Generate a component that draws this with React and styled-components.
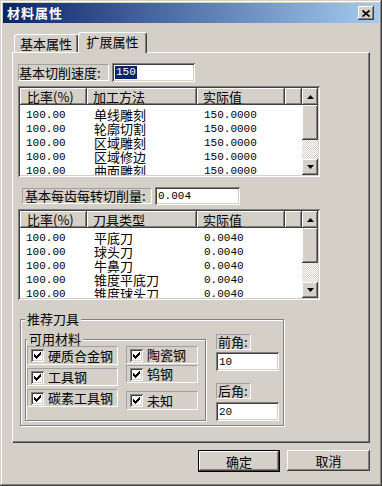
import React from "react";
import styled, { createGlobalStyle } from "styled-components";

const GlobalStyle = createGlobalStyle`
  html, body { margin: 0; padding: 0; background: #d4d0c8; }
  body {
    font-family: "Noto Sans CJK SC", "Liberation Sans", sans-serif;
    font-size: 13px;
    color: #000;
  }
  * { box-sizing: border-box; }
`;

const raised = `box-shadow: inset -1px -1px #404040, inset 1px 1px #fff, inset -2px -2px #808080, inset 2px 2px #d4d0c8;`;
const sunken = `box-shadow: inset 1px 1px #808080, inset -1px -1px #fff, inset 2px 2px #404040, inset -2px -2px #d4d0c8;`;

const Window = styled.div`
  width: 382px;
  height: 486px;
  padding: 3px;
  background: #d4d0c8;
  box-shadow: inset -1px -1px #404040, inset 1px 1px #d4d0c8, inset -2px -2px #808080, inset 2px 2px #fff;
  display: flex;
  flex-direction: column;
`;

const TitleBar = styled.div`
  height: 20px;
  flex: none;
  display: flex;
  align-items: center;
  justify-content: space-between;
  padding: 0 5px 0 4px;
  background: linear-gradient(to right, #0a246a, #a6caf0);
`;

const Title = styled.span`
  color: #fff;
  font-weight: bold;
  font-size: 13px;
  letter-spacing: 1px;
  line-height: 20px;
`;

const CloseBtn = styled.div`
  width: 16px;
  height: 14px;
  background: #d4d0c8;
  ${raised}
  display: flex;
  align-items: center;
  justify-content: center;
`;

const Client = styled.div`
  flex: 1;
  display: flex;
  flex-direction: column;
  padding: 0 9px;
`;

const TabStrip = styled.div`
  margin-top: 9px;
  height: 20px;
  flex: none;
  display: flex;
  align-items: flex-end;
`;

const Tab = styled.div`
  position: relative;
  z-index: ${(p) => (p.$active ? 1 : 0)};
  width: ${(p) => (p.$active ? 69 : 64)}px;
  height: ${(p) => (p.$active ? 21 : 18)}px;
  margin-left: ${(p) => (p.$active ? 0 : 2)}px;
  margin-bottom: ${(p) => (p.$active ? -1 : 0)}px;
  padding-bottom: ${(p) => (p.$active ? 3 : 0)}px;
  background: #d4d0c8;
  border-top: 1px solid #fff;
  border-left: 1px solid #fff;
  border-right: 1px solid #404040;
  border-radius: 3px 3px 0 0;
  box-shadow: inset -1px 0 #808080;
  display: flex;
  align-items: center;
  justify-content: center;
  line-height: 14px;
`;

const Panel = styled.div`
  height: 391px;
  flex: none;
  border-top: 1px solid #fff;
  border-left: 1px solid #fff;
  border-right: 1px solid #404040;
  border-bottom: 1px solid #404040;
  box-shadow: inset -1px -1px #808080;
  padding: 10px 0 0 5px;
  display: flex;
  flex-direction: column;
`;

const FieldRow = styled.div`
  display: flex;
  align-items: center;
  gap: 3px;
  margin-top: ${(p) => p.$mt || 0}px;
  margin-left: ${(p) => p.$ml || 0}px;
`;

const StaticLabel = styled.div`
  width: ${(p) => p.$w}px;
  height: ${(p) => p.$h || 16}px;
  border: 1px solid;
  border-color: #a0a0a0 #fff #fff #a0a0a0;
  padding-left: ${(p) => p.$pl ?? 1}px;
  line-height: ${(p) => (p.$h || 16) - 2}px;
  white-space: nowrap;
`;

const Field = styled.div`
  width: ${(p) => p.$w}px;
  height: ${(p) => p.$h}px;
  margin-top: ${(p) => p.$mt || 0}px;
  background: #fff;
  ${sunken}
  padding-left: 3px;
  display: flex;
  align-items: center;
  font-family: "Liberation Mono", monospace;
  font-size: 11px;
`;

const Selected = styled.span`
  background: #0a246a;
  color: #fff;
  line-height: 13px;
  padding: 0 1px;
`;

const ListBox = styled.div`
  margin-top: ${(p) => p.$mt}px;
  width: 302px;
  height: 91px;
  flex: none;
  background: #fff;
  ${sunken}
  padding: 2px;
  display: flex;
`;

const ListMain = styled.div`
  flex: 1;
  display: flex;
  flex-direction: column;
  overflow: hidden;
`;

const HeaderRow = styled.div`
  display: flex;
  height: 17px;
  flex: none;
`;

const HeaderCell = styled.div`
  width: ${(p) => p.$w}px;
  flex: none;
  background: #d4d0c8;
  box-shadow: inset -1px -1px #404040, inset 1px 1px #fff, inset -2px -2px #808080;
  padding-left: ${(p) => p.$pl}px;
  line-height: 17px;
  white-space: nowrap;
`;

const Rows = styled.div`
  padding-top: 3px;
`;

const Row = styled.div`
  display: flex;
  height: 14px;
`;

const Cell = styled.div`
  width: ${(p) => p.$w}px;
  flex: none;
  padding-left: ${(p) => p.$pl}px;
  line-height: 14px;
  white-space: nowrap;
  font-family: ${(p) => (p.$mono ? '"Liberation Mono", monospace' : '"Noto Sans CJK SC", sans-serif')};
  font-size: ${(p) => (p.$mono ? 11 : 13)}px;
`;

const ScrollBar = styled.div`
  width: 16px;
  flex: none;
  display: flex;
  flex-direction: column;
`;

const ScrollBtn = styled.div`
  height: ${(p) => p.$h}px;
  flex: none;
  background: #d4d0c8;
  ${raised}
  display: flex;
  align-items: center;
  justify-content: center;
`;

const ScrollTrack = styled.div`
  flex: 1;
  background: repeating-conic-gradient(#fff 0 25%, #d4d0c8 0 50%) 0 0 / 2px 2px;
`;

const Group = styled.fieldset`
  margin: ${(p) => p.$m};
  width: ${(p) => p.$w}px;
  padding: ${(p) => p.$p};
  border: 1px solid #808080;
  box-shadow: inset 1px 1px #fff, 1px 1px #fff;
  min-width: 0;
`;

const Legend = styled.legend`
  padding: 0 2px;
  line-height: 14px;
  background: #d4d0c8;
`;

const GroupBody = styled.div`
  display: flex;
  gap: ${(p) => p.$gap || 0}px;
`;

const CheckCol = styled.div`
  display: flex;
  flex-direction: column;
  width: ${(p) => p.$w}px;
`;

const CheckItem = styled.div`
  display: flex;
  align-items: center;
  gap: 4px;
  height: ${(p) => p.$h}px;
  margin-top: ${(p) => p.$mt || 0}px;
  padding-left: 3px;
  border: 1px solid;
  border-color: #a0a0a0 #fff #fff #a0a0a0;
  line-height: 14px;
  white-space: nowrap;
`;

const CheckBox = styled.span`
  width: 13px;
  height: 13px;
  flex: none;
  background: #fff;
  ${sunken}
  display: flex;
  align-items: center;
  justify-content: center;
`;

const AngleCol = styled.div`
  display: flex;
  flex-direction: column;
  width: 63px;
  padding-top: 8px;
`;

const ButtonRow = styled.div`
  margin-top: 7px;
  display: flex;
  justify-content: flex-end;
  gap: 7px;
`;

const Button = styled.button`
  width: ${(p) => p.$w}px;
  height: ${(p) => p.$h}px;
  border: none;
  padding: 0;
  background: #d4d0c8;
  font-family: "Noto Sans CJK SC", sans-serif;
  font-size: 13px;
  color: #000;
  ${(p) =>
    p.$default
      ? "box-shadow: inset 0 0 0 1px #000, inset -2px -2px #404040, inset 2px 2px #fff, inset -3px -3px #808080;"
      : raised}
`;

const Arrow = ({ up }) => (
  <svg width="7" height="4" viewBox="0 0 7 4">
    <polygon points={up ? "0,4 7,4 3.5,0" : "0,0 7,0 3.5,4"} fill="#000" />
  </svg>
);

const Check = () => (
  <svg width="7" height="7" viewBox="0 0 7 7" shapeRendering="crispEdges">
    <path d="M0 2h1v3h-1zM1 3h1v3h-1zM2 4h1v3h-1zM3 3h1v3h-1zM4 2h1v3h-1zM5 1h1v3h-1zM6 0h1v3h-1z" fill="#000" />
  </svg>
);

const ListView = ({ mt, headers, rows }) => (
  <ListBox $mt={mt}>
    <ListMain>
      <HeaderRow>
        {headers.map((h, i) => (
          <HeaderCell key={i} $w={h.w} $pl={h.pl}>
            {h.t}
          </HeaderCell>
        ))}
      </HeaderRow>
      <Rows>
        {rows.map((r, i) => (
          <Row key={i}>
            <Cell $w={67} $pl={6} $mono>{r[0]}</Cell>
            <Cell $w={110} $pl={7}>{r[1]}</Cell>
            <Cell $w={88} $pl={7} $mono>{r[2]}</Cell>
          </Row>
        ))}
      </Rows>
    </ListMain>
    <ScrollBar>
      <ScrollBtn $h={17}><Arrow up /></ScrollBtn>
      <ScrollBtn $h={35} />
      <ScrollTrack />
      <ScrollBtn $h={16}><Arrow /></ScrollBtn>
    </ScrollBar>
  </ListBox>
);

const headers1 = [
  { t: "比率(%)", w: 67, pl: 7 },
  { t: "加工方法", w: 110, pl: 6 },
  { t: "实际值", w: 88, pl: 6 },
  { t: "", w: 17, pl: 0 },
];
const headers2 = [
  { t: "比率(%)", w: 67, pl: 7 },
  { t: "刀具类型", w: 110, pl: 6 },
  { t: "实际值", w: 88, pl: 6 },
  { t: "", w: 17, pl: 0 },
];
const rows1 = ["单线雕刻", "轮廓切割", "区域雕刻", "区域修边", "曲面雕刻"].map((m) => ["100.00", m, "150.0000"]);
const rows2 = ["平底刀", "球头刀", "牛鼻刀", "锥度平底刀", "锥度球头刀"].map((m) => ["100.00", m, "0.0040"]);

const col1 = [
  { t: "硬质合金钢", h: 19, mt: 0 },
  { t: "工具钢", h: 18, mt: 3 },
  { t: "碳素工具钢", h: 18, mt: 3 },
];
const col2 = [
  { t: "陶瓷钢", h: 18, mt: 0 },
  { t: "钨钢", h: 18, mt: 1 },
  { t: "未知", h: 19, mt: 8 },
];

export default function App() {
  return (
    <>
      <GlobalStyle />
      <Window>
        <TitleBar>
          <Title>材料属性</Title>
          <CloseBtn>
            <svg width="8" height="7" viewBox="0 0 8 7">
              <path d="M0.5 0.5 L7.5 6.5 M7.5 0.5 L0.5 6.5" stroke="#000" strokeWidth="1.7" />
            </svg>
          </CloseBtn>
        </TitleBar>
        <Client>
          <TabStrip>
            <Tab>基本属性</Tab>
            <Tab $active>扩展属性</Tab>
          </TabStrip>
          <Panel>
            <FieldRow>
              <StaticLabel $w={91} $h={17} $pl={0}>基本切削速度:</StaticLabel>
              <Field $w={83} $h={19}>
                <Selected>150</Selected>
              </Field>
            </FieldRow>
            <ListView mt={4} headers={headers1} rows={rows1} />
            <FieldRow $mt={10} $ml={4}>
              <StaticLabel $w={130} $h={16} $pl={2}>基本每齿每转切削量:</StaticLabel>
              <Field $w={85} $h={18}>0.004</Field>
            </FieldRow>
            <ListView mt={4} headers={headers2} rows={rows2} />
            <Group $m="12px 0 0 2px" $w={264} $p="0 4px 4px 4px">
              <Legend>推荐刀具</Legend>
              <GroupBody $gap={10}>
                <Group $m="6px 0 0 0" $w={182} $p="0 3px 3px 1px">
                  <Legend>可用材料</Legend>
                  <GroupBody $gap={8}>
                    <CheckCol $w={91}>
                      {col1.map((c) => (
                        <CheckItem key={c.t} $h={c.h} $mt={c.mt}>
                          <CheckBox><Check /></CheckBox>
                          {c.t}
                        </CheckItem>
                      ))}
                    </CheckCol>
                    <CheckCol $w={72}>
                      {col2.map((c) => (
                        <CheckItem key={c.t} $h={c.h} $mt={c.mt}>
                          <CheckBox><Check /></CheckBox>
                          {c.t}
                        </CheckItem>
                      ))}
                    </CheckCol>
                  </GroupBody>
                </Group>
                <AngleCol>
                  <StaticLabel $w={35} $h={16}>前角:</StaticLabel>
                  <Field $w={63} $h={19} $mt={2}>10</Field>
                  <StaticLabel $w={35} $h={16} style={{ marginTop: 12 }}>后角:</StaticLabel>
                  <Field $w={63} $h={19} $mt={3}>20</Field>
                </AngleCol>
              </GroupBody>
            </Group>
          </Panel>
          <ButtonRow>
            <Button $default $w={82} $h={22}>确定</Button>
            <Button $w={83} $h={21}>取消</Button>
          </ButtonRow>
        </Client>
      </Window>
    </>
  );
}
